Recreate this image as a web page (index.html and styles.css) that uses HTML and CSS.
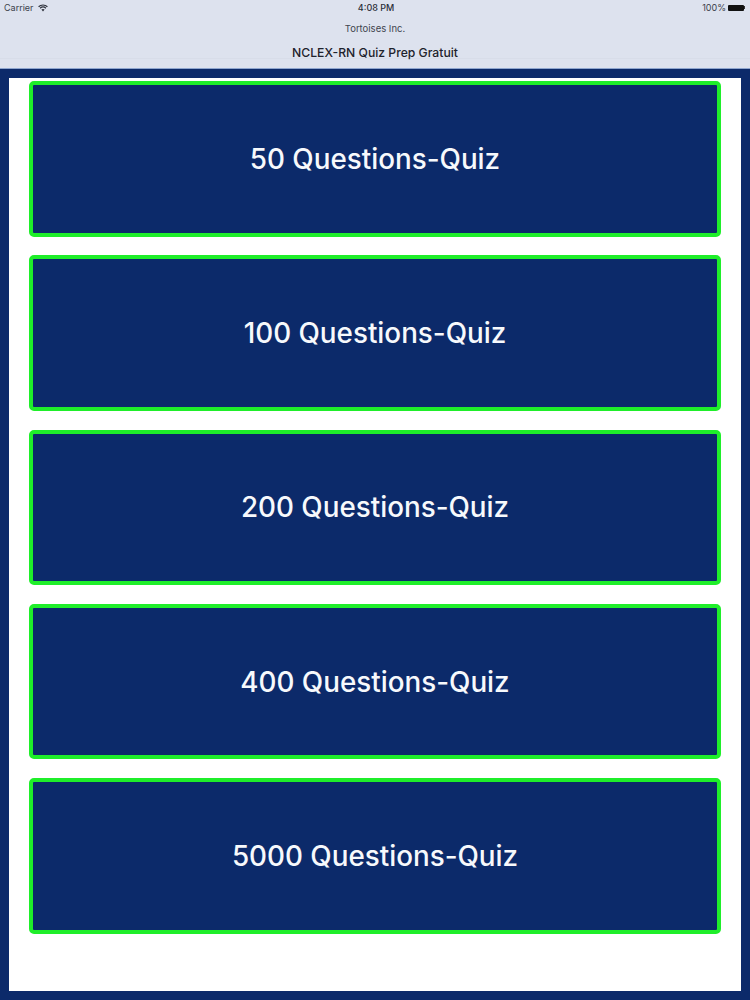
FILE: index.html
```html
<!DOCTYPE html>
<html lang="en">
<head>
<meta charset="utf-8">
<title>NCLEX-RN Quiz Prep Gratuit</title>
<link rel="stylesheet" href="styles.css">
</head>
<body>
<div class="screen">
  <header class="header">
    <div class="status">
      <div class="status-left">
        <span>Carrier</span>
        <svg class="wifi" viewBox="0 0 10 8" width="10" height="8"><path d="M.6 2.700C3 .4 7 .4 9.400 2.700M2.100 4.200C3.800 2.700 6.200 2.700 7.900 4.200" fill="none" stroke="#2a2e38" stroke-width="1.200"/><path d="M3.400 5.500C4.400 4.700 5.600 4.700 6.600 5.500L5 7.400Z" fill="#2a2e38"/></svg>
      </div>
      <div class="status-time">4:08 PM</div>
      <div class="status-right">
        <span>100%</span>
        <span class="battery"></span><span class="battery-tip"></span>
      </div>
    </div>
    <div class="subtitle">Tortoises Inc.</div>
    <div class="title-row">NCLEX-RN Quiz Prep Gratuit</div>
  </header>
  <main class="main">
    <div class="panel">
      <button class="quiz">50 Questions-Quiz</button>
      <button class="quiz">100 Questions-Quiz</button>
      <button class="quiz">200 Questions-Quiz</button>
      <button class="quiz">400 Questions-Quiz</button>
      <button class="quiz">5000 Questions-Quiz</button>
    </div>
  </main>
</div>
</body>
</html>
```
FILE: styles.css
```css
* { box-sizing: border-box; }
html, body { margin: 0; padding: 0; }
body { width: 750px; height: 1000px; overflow: hidden; font-family: Inter, "Liberation Sans", sans-serif; background: #0c2a6a; }
.screen { width: 750px; height: 1000px; display: flex; flex-direction: column; }
.header { height: 69px; flex: none; background: #dde2ee; border-bottom: 1px solid #8fa6cf; display: flex; flex-direction: column; align-items: stretch; color: #22262f; }
.status { height: 15px; padding: 0 4px; display: grid; grid-template-columns: 1fr auto 1fr; align-items: center; font-size: 9px; color: #3b3f4a; }
.status-left { display: flex; align-items: center; gap: 4px; }
.wifi { display: block; }
.status-time { font-weight: 500; color: #2a2e38; padding-left: 2px; }
.status-right { display: flex; align-items: center; justify-content: flex-end; }
.battery { width: 16px; height: 6px; margin-left: 2px; background: #111; border-radius: 1px; }
.battery-tip { width: 1px; height: 3px; background: #333; margin-right: 1px; }
.subtitle { height: 26px; display: flex; align-items: center; justify-content: center; font-size: 9.500px; color: #41454f; }
.title-row { height: 18px; padding-top: 6px; display: flex; align-items: center; justify-content: center; font-size: 12.200px; font-weight: 500; color: #1e222c; border-bottom: 1px solid #d8dde9; }
.main { flex: 1; padding: 9px; }
.panel { height: 913px; background: #fff; padding: 3px 20px 0; display: flex; flex-direction: column; gap: 18.750px; }
.quiz { height: 155.500px; flex: none; width: 100%; background: #0c2a6a; border: 4px solid #1fee2a; border-radius: 5px; color: #f7f9fc; font-family: inherit; font-size: 27.800px; font-weight: 500; text-align: center; padding: 0; }
```
